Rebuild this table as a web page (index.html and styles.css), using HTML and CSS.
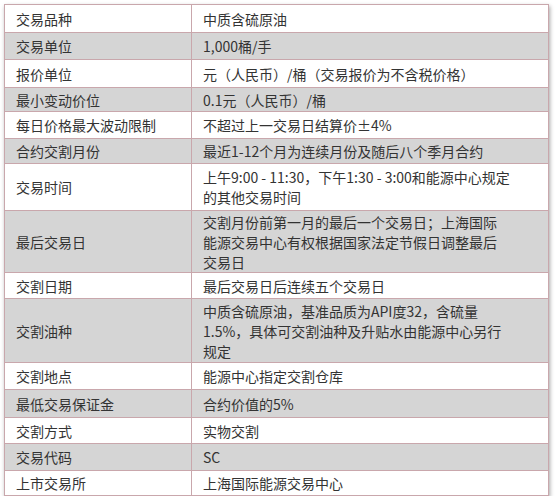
FILE: index.html
```html
<!DOCTYPE html>
<html lang="zh-CN">
<head>
<meta charset="utf-8">
<link rel="stylesheet" href="styles.css">
</head>
<body>
<div class="wrap">
<table class="spec">
<colgroup><col class="c1"><col class="c2"></colgroup>
<tr class="h28"><td>交易品种</td><td>中质含硫原油</td></tr>
<tr class="g h27"><td>交易单位</td><td>1,000桶/手</td></tr>
<tr class="h28"><td>报价单位</td><td>元（人民币）/桶（交易报价为不含税价格）</td></tr>
<tr class="g h24"><td>最小变动价位</td><td>0.1元（人民币）/桶</td></tr>
<tr class="h27"><td>每日价格最大波动限制</td><td>不超过上一交易日结算价±4%</td></tr>
<tr class="g h25"><td>合约交割月份</td><td>最近1-12个月为连续月份及随后八个季月合约</td></tr>
<tr class="h47"><td>交易时间</td><td>上午9:00 - 11:30，下午1:30 - 3:00和能源中心规定<br>的其他交易时间</td></tr>
<tr class="g h62"><td>最后交易日</td><td>交割月份前第一月的最后一个交易日；上海国际<br>能源交易中心有权根据国家法定节假日调整最后<br>交易日</td></tr>
<tr class="h26"><td>交割日期</td><td>最后交易日后连续五个交易日</td></tr>
<tr class="g h64"><td>交割油种</td><td>中质含硫原油，基准品质为API度32，含硫量<br>1.5%，具体可交割油种及升贴水由能源中心另行<br>规定</td></tr>
<tr class="h27"><td>交割地点</td><td>能源中心指定交割仓库</td></tr>
<tr class="g h28"><td>最低交易保证金</td><td>合约价值的5%</td></tr>
<tr class="h26"><td>交割方式</td><td>实物交割</td></tr>
<tr class="g h27"><td>交易代码</td><td>SC</td></tr>
<tr class="h25"><td>上市交易所</td><td>上海国际能源交易中心</td></tr>
</table>
</div>
</body>
</html>
```

FILE: styles.css
```css
html, body {
  margin: 0;
  padding: 0;
  background: #ffffff;
}
.wrap {
  margin: 4px 0 0 4px;
  width: 545px;
  box-shadow: 1px 2px 4px rgba(0, 0, 0, 0.35);
}
.spec {
  width: 545px;
  border-collapse: collapse;
  font-family: "Noto Sans CJK SC", "Noto Sans", sans-serif;
  font-size: 14px;
  line-height: 20px;
  color: #333333;
  border: 1px solid #b9959b;
}
.c1 { width: 187px; }
.spec td {
  border: 1px solid #c9a7ac;
  padding: 0 10px 0 11px;
  vertical-align: middle;
  text-align: left;
  white-space: nowrap;
}
.spec tr.g td {
  background: #d5d5d5;
}
.h24 { height: 24px; }
.h25 { height: 25px; }
.h26 { height: 26px; }
.h27 { height: 27px; }
.h28 { height: 28px; }
.h47 { height: 47px; }
.h62 { height: 62px; }
.h64 { height: 64px; }
```
